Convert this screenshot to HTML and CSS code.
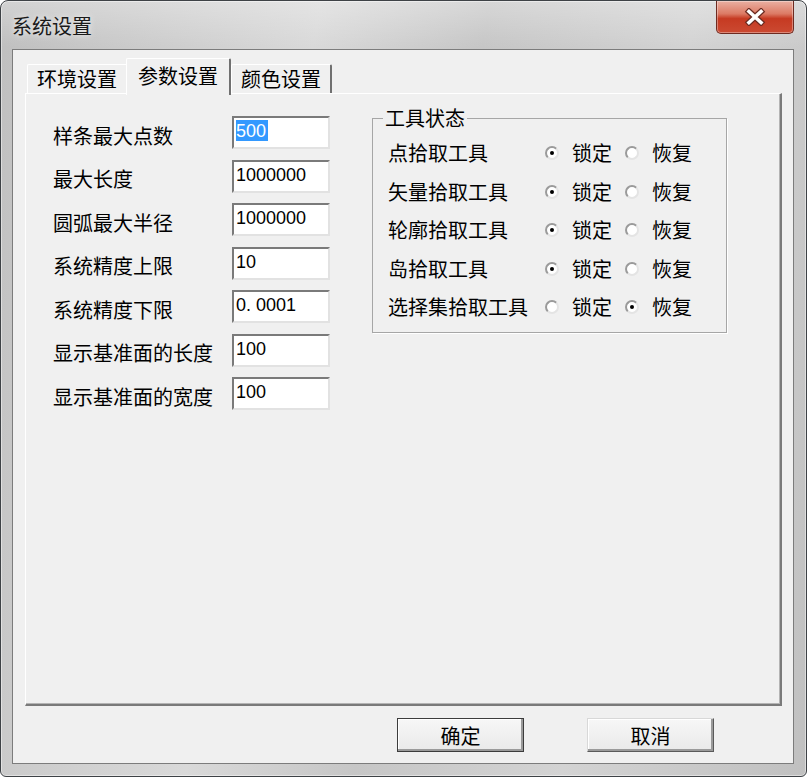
FILE: index.html
```html
<!DOCTYPE html>
<html lang="zh-CN">
<head>
  <meta charset="UTF-8" />
  <meta name="viewport" content="width=device-width, initial-scale=1.0"/>
  <title>系统设置</title>
  <link rel="stylesheet" href="styles.css">
</head>
<body>
  <div class="window">
    <div class="titlebar">
      <span class="title">系统设置</span>
      <button class="close-btn" aria-label="关闭">
        <svg width="22" height="18" viewBox="0 0 22 18">
          <path d="M5 3.5 L17 14.5 M17 3.5 L5 14.5" stroke="#6b2a20" stroke-width="6" stroke-linecap="square" fill="none"/>
          <path d="M5 3.5 L17 14.5 M17 3.5 L5 14.5" stroke="#fff" stroke-width="3.6" stroke-linecap="square" fill="none"/>
        </svg>
      </button>
    </div>

    <div class="client">
      <div class="tabs">
        <div class="tab">环境设置</div>
        <div class="tab active">参数设置</div>
        <div class="tab">颜色设置</div>
      </div>

      <div class="panel">
        <div class="fields">
          <label>样条最大点数</label>
          <div class="edit"><span class="sel">500</span></div>
          <label>最大长度</label>
          <div class="edit">1000000</div>
          <label>圆弧最大半径</label>
          <div class="edit">1000000</div>
          <label>系统精度上限</label>
          <div class="edit">10</div>
          <label>系统精度下限</label>
          <div class="edit">0. 0001</div>
          <label>显示基准面的长度</label>
          <div class="edit">100</div>
          <label>显示基准面的宽度</label>
          <div class="edit">100</div>
        </div>

        <fieldset class="group">
          <legend>工具状态</legend>
          <div class="tool-row">
            <span class="tool-name">点拾取工具</span>
            <span class="opt"><i class="radio checked"></i>锁定</span>
            <span class="opt"><i class="radio"></i>恢复</span>
          </div>
          <div class="tool-row">
            <span class="tool-name">矢量拾取工具</span>
            <span class="opt"><i class="radio checked"></i>锁定</span>
            <span class="opt"><i class="radio"></i>恢复</span>
          </div>
          <div class="tool-row">
            <span class="tool-name">轮廓拾取工具</span>
            <span class="opt"><i class="radio checked"></i>锁定</span>
            <span class="opt"><i class="radio"></i>恢复</span>
          </div>
          <div class="tool-row">
            <span class="tool-name">岛拾取工具</span>
            <span class="opt"><i class="radio checked"></i>锁定</span>
            <span class="opt"><i class="radio"></i>恢复</span>
          </div>
          <div class="tool-row">
            <span class="tool-name">选择集拾取工具</span>
            <span class="opt"><i class="radio"></i>锁定</span>
            <span class="opt"><i class="radio checked"></i>恢复</span>
          </div>
        </fieldset>
      </div>

      <div class="actions">
        <button class="btn default">确定</button>
        <button class="btn">取消</button>
      </div>
    </div>
  </div>
</body>
</html>
```

FILE: styles.css
```css
* {
  margin: 0;
  padding: 0;
  box-sizing: border-box;
}

body {
  background-color: #fff;
  font-family: "Noto Sans CJK SC", sans-serif;
  font-size: 20px;
  line-height: 24px;
  color: #000;
}

/* 窗口外框 */
.window {
  width: 807px;
  height: 777px;
  border: 1px solid #3e4246;
  border-radius: 8px 8px 6px 6px;
  background:
    linear-gradient(to bottom, rgba(255, 255, 255, 0.3), rgba(255, 255, 255, 0) 46px),
    linear-gradient(100deg, #bfbfbf 0%, #cdcdcd 18%, #d9d9d9 34%, #c6c6c6 52%, #d3d3d3 74%, #c0c0c0 100%);
  box-shadow: inset 0 0 0 1px rgba(255, 255, 255, 0.45);
  padding: 0 12px 12px 11px;
  display: flex;
  flex-direction: column;
  overflow: hidden;
}

.titlebar {
  height: 48px;
  display: flex;
  align-items: center;
  flex-shrink: 0;
}

.title {
  padding-top: 2px;
  color: #1a1a1a;
  text-shadow: 0 0 6px rgba(255, 255, 255, 0.9);
}

.close-btn {
  align-self: flex-start;
  margin-left: auto;
  width: 78px;
  height: 33px;
  border: 1px solid #6e2a20;
  border-top: none;
  border-radius: 0 0 5px 5px;
  background: linear-gradient(to bottom, #eab0a2 0%, #dc7a64 40%, #c63a22 55%, #cb4a32 100%);
  box-shadow: inset 0 0 0 1px rgba(255, 255, 255, 0.35);
  display: flex;
  align-items: center;
  justify-content: center;
  cursor: pointer;
}

/* 客户区 */
.client {
  flex: 1;
  background-color: #f0f0f0;
  border: 1px solid #7c7c7c;
  display: flex;
  flex-direction: column;
}

.tabs {
  display: flex;
  align-items: flex-end;
  padding-top: 8px;
  margin-left: 14px;
}

.tab {
  height: 29px;
  padding: 0 9px;
  display: flex;
  align-items: center;
  background-color: #f0f0f0;
  border-top: 1px solid #fff;
  border-left: 1px solid #fff;
  border-right: 2px solid #707070;
  border-radius: 2px 2px 0 0;
}

.tab.active {
  position: relative;
  z-index: 1;
  height: 37px;
  margin-left: -2px;
  margin-bottom: -2px;
  padding: 0 11px 3px;
}

.panel {
  flex: 1;
  margin: 0 11px 0 12px;
  border-top: 1px solid #fff;
  border-left: 1px solid #fff;
  border-right: 2px solid #7a7a7a;
  border-bottom: 2px solid #7a7a7a;
  box-shadow: inset -1px -1px 0 #b4b4b4;
  padding: 13px 0 0 27px;
  display: flex;
  align-items: flex-start;
}

.fields {
  margin-top: 9px;
  display: grid;
  grid-template-columns: 179px 98px;
  grid-auto-rows: 33px;
  row-gap: 10.5px;
}

.fields label {
  align-self: center;
  padding-top: 6px;
}

.edit {
  background-color: #fff;
  border: 2px solid;
  border-color: #7a7a7a #e2e2e2 #e2e2e2 #7a7a7a;
  padding: 3px 0 0 2px;
  font-family: "Liberation Sans", Arial, sans-serif;
  font-size: 18px;
  line-height: 20px;
  white-space: pre;
}

.sel {
  background-color: #3399ff;
  color: #fff;
  padding: 1px 2px 0 0;
}

/* 工具状态 */
.group {
  margin-left: 42px;
  width: 355px;
  border: 1px solid #a6a6a6;
  box-shadow: 1px 1px 0 #fff;
  padding: 5px 0 5px 15px;
}

.group legend {
  margin-left: -5px;
  padding: 0 2px;
  line-height: 22px;
}

.tool-row {
  height: 38.5px;
  display: flex;
  align-items: center;
}

.tool-name {
  width: 157px;
  flex-shrink: 0;
}

.opt {
  display: flex;
  align-items: center;
  gap: 13px;
  margin-right: 13px;
}

.radio {
  position: relative;
  flex-shrink: 0;
  width: 14px;
  height: 14px;
  border-radius: 50%;
  background-color: #fff;
  border: 2px solid;
  border-color: #9a9a9a #e4e4e4 #e4e4e4 #9a9a9a;
}

.radio.checked::after {
  content: '';
  position: absolute;
  left: 3px;
  top: 3px;
  width: 4px;
  height: 4px;
  border-radius: 50%;
  background-color: #000;
}

/* 底部按钮 */
.actions {
  display: flex;
  gap: 63px;
  padding: 12px 0 11px 384px;
}

.btn {
  width: 127px;
  height: 34px;
  font-family: inherit;
  font-size: 20px;
  color: #000;
  background: linear-gradient(to bottom, #f7f7f7, #e9e9e9);
  border: 1px solid;
  border-color: #d8d8d8 #5a5a5a #5a5a5a #d8d8d8;
  box-shadow: inset -2px -2px 0 #9a9a9a, inset 1px 1px 0 #fff;
  cursor: pointer;
}

.btn.default {
  border-color: #3c3c3c;
}
```
